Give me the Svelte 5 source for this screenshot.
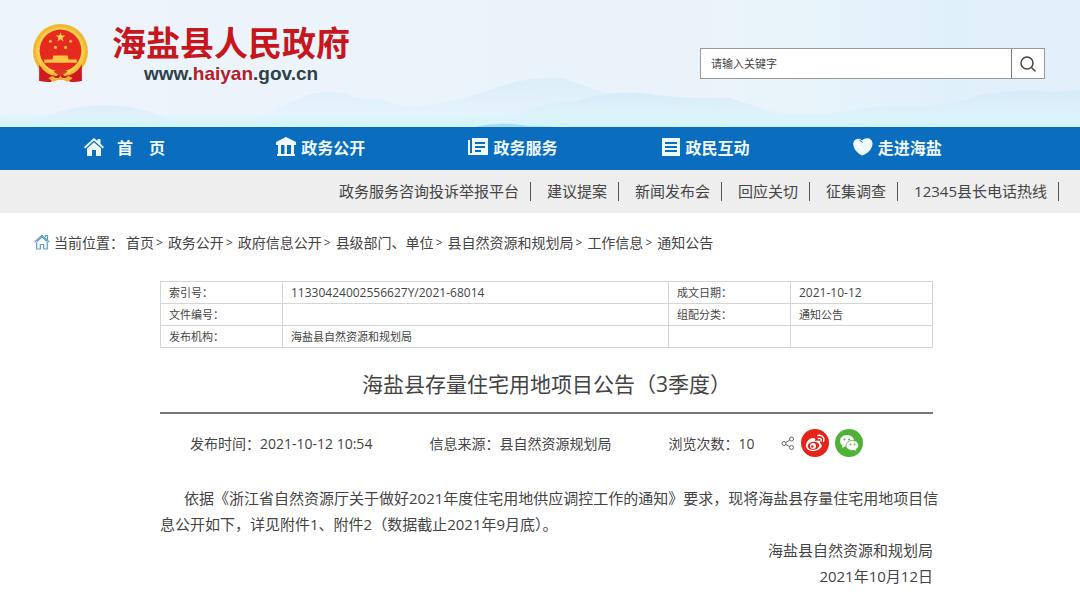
<script lang="ts">
	let keyword = '';

	const nav = [
		{ icon: 'home', label: '首　页' },
		{ icon: 'hall', label: '政务公开' },
		{ icon: 'news', label: '政务服务' },
		{ icon: 'list', label: '政民互动' },
		{ icon: 'heart', label: '走进海盐' }
	];
	const links = ['政务服务咨询投诉举报平台', '建议提案', '新闻发布会', '回应关切', '征集调查', '12345县长电话热线'];
	const crumbs = ['首页', '政务公开', '政府信息公开', '县级部门、单位', '县自然资源和规划局', '工作信息', '通知公告'];
	const rows = [
		['索引号：', '11330424002556627Y/2021-68014', '成文日期：', '2021-10-12'],
		['文件编号：', '', '组配分类：', '通知公告'],
		['发布机构：', '海盐县自然资源和规划局', '', '']
	];
</script>

<header class="header">
	<svg class="hills" viewBox="0 0 1080 127" preserveAspectRatio="none" aria-hidden="true">
		<defs>
			<linearGradient id="sky" x1="0" y1="0" x2="1" y2="0">
				<stop offset="0" stop-color="#edf4fb" />
				<stop offset="0.6" stop-color="#ebf3fa" />
				<stop offset="0.72" stop-color="#e9f4f9" />
				<stop offset="0.88" stop-color="#e0f0fb" />
				<stop offset="1" stop-color="#e3f0fa" />
			</linearGradient>
			<linearGradient id="hill" x1="0" y1="0" x2="0" y2="1">
				<stop offset="0" stop-color="#d3eaf8" />
				<stop offset="1" stop-color="#e4f6fd" />
			</linearGradient>
			<linearGradient id="mist" x1="0" y1="0" x2="0" y2="1">
				<stop offset="0" stop-color="#d5f3fc" stop-opacity="0" />
				<stop offset="1" stop-color="#d2f4fd" />
			</linearGradient>
		</defs>
		<rect width="1080" height="127" fill="url(#sky)" />
		<path d="M20 127Q60 108 90 106Q125 103 150 112L190 127Z" fill="url(#hill)" opacity=".6" />
		<path d="M235 127Q275 111 300 98Q325 88 345 94Q365 101 382 99Q393 107 420 106Q465 100 495 88Q535 74 565 79Q595 90 610 94Q630 90 655 96L720 105V127Z" fill="url(#hill)" opacity=".6" />
		<path d="M490 127Q545 98 575 102Q600 91 640 93Q680 99 730 98L770 111Q800 117 835 113Q875 105 907 107Q950 107 980 95Q1020 88 1050 92L1080 90V127Z" fill="url(#hill)" opacity=".8" />
		<rect y="112" width="1080" height="15" fill="url(#mist)" />
		<path d="M475 127Q500 121 528 126L560 127Z" fill="#a9dcf5" />
	</svg>
	<a class="brand" href="#home">
		<svg class="emblem" viewBox="0 0 54 58" aria-hidden="true">
			<path d="M8 41L7 56L17 57L21 53H34L38 57L48 56L46 41Z" fill="#c91a21" />
			<circle cx="27" cy="27" r="27" fill="#f0b72f" />
			<circle cx="27" cy="27" r="24" fill="#f8cc4d" />
			<circle cx="27" cy="26" r="20.5" fill="#e62a20" />
			<path d="M27 8l1.2 3.4h3.6l-2.9 2.2 1.1 3.5-3-2.1-3 2.1 1.1-3.5-2.9-2.2h3.6z" fill="#f9d34e" />
			<g fill="#f6bd45"><circle cx="17" cy="17" r="1.5" /><circle cx="37" cy="17" r="1.5" /><circle cx="22" cy="23" r="1.5" /><circle cx="32" cy="23" r="1.5" /></g>
			<path d="M20 31h14l1 4h8v3H11v-3h8z" fill="#f8c544" />
			<path d="M8 38Q13 47 22 49L27 45L32 49Q41 47 46 38L44 47L35 53H19L10 47Z" fill="#f3ba35" />
			<path d="M6 40Q13 51 23 51L27 48L31 51Q41 51 48 40V56L37 57L31 53H23L17 57L6 56Z" fill="#cf1920" />
			<path d="M15 53l4-2 5 3 3-3 3 3 5-3 4 2-5 4-4-2h-6l-4 2z" fill="#f1b234" />
			<path d="M20 47Q27 41 34 47L27 51Z" fill="#dc3a20" />
		</svg>
		<span class="brand-text">
			<span class="brand-name">海盐县人民政府</span>
			<span class="brand-url">www.<em>haiyan</em>.gov.cn</span>
		</span>
	</a>
	<form class="search" on:submit|preventDefault>
		<input type="text" placeholder="请输入关键字" aria-label="请输入关键字" bind:value={keyword} />
		<button type="submit" aria-label="搜索">
			<svg viewBox="0 0 18 18" width="18" height="18" fill="none" stroke="#444" stroke-width="1.5">
				<circle cx="8" cy="8" r="6" />
				<path d="M12.500 12.500l4 4" />
			</svg>
		</button>
	</form>
</header>

<nav class="nav">
	{#each nav as item}
		<a href="#{item.icon}" class:nav-home={item.icon === 'home'}>
			<svg viewBox="0 0 20 20" width="20" height="20" fill="#eefaff" aria-hidden="true">
				{#if item.icon === 'home'}
					<path d="M10 1L0 10l1.3 1.4L10 3.6l8.7 7.8L20 10l-3.5-3.2V2h-3v2.1z" />
					<path d="M10 5.2l-7 6.2V19h5v-6h4v6h5v-7.6z" />
				{:else if item.icon === 'hall'}
					<path d="M10 0L0 5V8h2v9H1v2h18v-2h-1V8h2V5zM5 8h3.500v9H5zM11 8h4v9h-4z" fill-rule="evenodd" />
				{:else if item.icon === 'news'}
					<path d="M0 3h2v13h2v2H0z" />
					<path d="M4 1h16v17H3v-2h1zM7 5v2h10V5zM7 9v2h10V9zM7 13v2h6v-2z" fill-rule="evenodd" />
				{:else if item.icon === 'list'}
					<path d="M1 1h18v18H1zM4 5v2h12V5zM4 9v2h12V9zM4 13v2h12v-2z" fill-rule="evenodd" />
				{:else}
					<path d="M9 3.500C6 0 0 2 .3 7.500C.5 13 6 17 9 18.500C15 17 20 11 19.500 6C19 0 12 0 9 3.500Z" />
					<path d="M6.500 3l3 2.500" fill="none" stroke="#0a6dbd" />
				{/if}
			</svg>
			<span>{item.label}</span>
		</a>
	{/each}
</nav>

<div class="subnav">
	{#each links as link}
		<a href="#links">{link}</a>
	{/each}
</div>

<div class="crumbs">
	<svg viewBox="0 0 16 16" width="16" height="16" fill="none" stroke="#5e9fc4" stroke-width="1.2" aria-hidden="true">
		<path d="M.7 8L8 1.3 15.3 8M11.5 3V1.5h2V6M2.7 8v7h3.6v-4.5h3.4V15h3.6V8" />
		<path d="M3 7.5L8 3l5 4.5" />
	</svg>
	<span class="crumbs-label">当前位置：</span>
	{#each crumbs as crumb, i}
		<a href="#crumb">{crumb}</a>
		{#if i < crumbs.length - 1}<span class="arrow">&gt;</span>{/if}
	{/each}
</div>

<main class="article">
	<table class="info">
		<colgroup>
			<col class="col-label" />
			<col />
			<col class="col-label" />
			<col class="col-value" />
		</colgroup>
		<tbody>
			{#each rows as row}
				<tr>
					{#each row as cell}<td class:num={/^\d/.test(cell)}>{cell}</td>{/each}
				</tr>
			{/each}
		</tbody>
	</table>

	<h1>海盐县存量住宅用地项目公告（3季度）</h1>

	<div class="meta">
		<span class="meta-time">发布时间：2021-10-12 10:54</span>
		<span class="meta-source">信息来源：县自然资源规划局</span>
		<span>浏览次数：10</span>
		<div class="share">
			<svg viewBox="0 0 14 14" width="14" height="14" fill="none" stroke="#666" aria-hidden="true">
				<circle cx="3" cy="7.5" r="2" />
				<circle cx="10.5" cy="3" r="2" />
				<circle cx="10.5" cy="11.5" r="2" />
				<path d="M4.7 6.5l4-2.5M4.7 8.5l4 2" />
			</svg>
			<button type="button" class="weibo" aria-label="微博">
				<svg viewBox="0 0 28 28" width="28" height="28">
					<path d="M12 9C8 9 4 14 5 18C6 22 12 23 17 21C21 19 22 16 19 14C20 11 17 11 14 12C15 10 14 9 12 9Z" fill="#fff" />
					<ellipse cx="12.5" cy="16.8" rx="5.8" ry="4" fill="#e6231a" transform="rotate(-8 12.5 16.8)" />
					<circle cx="12" cy="17" r="3" fill="#fff" />
					<circle cx="11.3" cy="17.5" r="1.3" fill="#e6231a" />
					<path d="M17 6.5C21 5.5 24 9 22.5 12.5M17.5 9.5C19.5 9 21 10.5 20 12" fill="none" stroke="#fff" stroke-width="1.4" stroke-linecap="round" />
				</svg>
			</button>
			<button type="button" class="wechat" aria-label="微信">
				<svg viewBox="0 0 28 28" width="28" height="28">
					<path d="M12 6C7.5 6 5 9 5 12C5 14 6 15.5 7.5 16.5L7 19L10 17.5C16 18 19 15 19 12C19 8.500 16 6 12 6Z" fill="#fff" />
					<path d="M17.5 11.5C13.5 11.5 11 14 11 16.5C11 20 14.5 22 19 21.3L21.5 22.5L21 20.5C22.5 19.5 23.5 18 23.5 16.5C23.5 13.5 21 11.5 17.5 11.5Z" fill="#fff" stroke="#4fb136" stroke-width=".8" />
					<g fill="#4fb136"><circle cx="9.5" cy="10.5" r="1" /><circle cx="14" cy="10.5" r="1" /><circle cx="15.5" cy="15.5" r=".9" /><circle cx="19.5" cy="15.5" r=".9" /></g>
				</svg>
			</button>
		</div>
	</div>

	<div class="content">
		<p>依据《浙江省自然资源厅关于做好2021年度住宅用地供应调控工作的通知》要求，现将海盐县存量住宅用地项目信<br />息公开如下，详见附件1、附件2（数据截止2021年9月底）。</p>
		<div class="sign">海盐县自然资源和规划局</div>
		<div class="sign">2021年10月12日</div>
	</div>
</main>

<style>
:global(body) {
	margin: 0;
	background: #fff;
	color: #444;
	font-family: "Open Sans", "Noto Sans CJK SC", sans-serif;
	font-size: 14px;
}
a {
	color: inherit;
	text-decoration: none;
}
.header {
	position: relative;
	display: flex;
	justify-content: space-between;
	height: 127px;
	padding: 0 35px 0 33px;
}
.hills {
	position: absolute;
	inset: 0;
	width: 100%;
	height: 100%;
	z-index: -1;
}
.brand {
	display: flex;
	gap: 24px;
	padding-top: 24px;
}
.emblem {
	width: 55px;
	height: 59px;
}
.brand-text {
	display: flex;
	flex-direction: column;
	align-items: center;
}
.brand-name {
	color: #c8161d;
	font-size: 34px;
	font-weight: bold;
	line-height: 38px;
}
.brand-url {
	color: #2e4049;
	font-family: "Liberation Sans", Arial, sans-serif;
	font-size: 19px;
	font-weight: bold;
	line-height: 24px;
}
.brand-url em {
	color: #b3202a;
	font-style: normal;
}
.search {
	display: flex;
	box-sizing: border-box;
	width: 345px;
	height: 31px;
	margin-top: 48px;
	border: 1px solid #999;
	background: #fff;
}
.search input {
	flex: 1;
	min-width: 0;
	padding: 0 10px;
	border: 0;
	background: none;
	font: inherit;
	font-size: 11px;
}
.search input::placeholder {
	color: #444;
}
.search button {
	display: flex;
	align-items: center;
	justify-content: center;
	width: 33px;
	padding: 0;
	border: 0;
	border-left: 1px solid #777;
	background: none;
}
.nav {
	display: grid;
	grid-template-columns: repeat(5, 1fr);
	box-sizing: border-box;
	height: 43px;
	padding: 0 35px 3px 84px;
	background: #0a6dbd;
	color: #eefaff;
	font-size: 16px;
	font-weight: bold;
}
.nav a {
	display: flex;
	align-items: center;
	gap: 5px;
}
.nav .nav-home {
	gap: 13px;
}
.subnav {
	display: flex;
	align-items: center;
	justify-content: flex-end;
	height: 43px;
	padding-right: 21px;
	background: #eee;
	font-size: 15px;
}
.subnav a {
	padding: 0 11px 0 16px;
	border-right: 1px solid #555;
	line-height: 19px;
}
.crumbs {
	display: flex;
	align-items: center;
	height: 20px;
	padding: 19px 34px 0;
}
.crumbs-label {
	margin: 0 2px 0 4px;
}
.crumbs .arrow {
	margin: 0 5px 0 2px;
	font-size: 12px;
}
.article {
	margin: 29px 147px 0 160px;
}
.info {
	width: 100%;
	table-layout: fixed;
	border-collapse: collapse;
	font-size: 11px;
}
.col-label {
	width: 122px;
}
.col-value {
	width: 142px;
}
.info td {
	height: 21px;
	padding: 0 8px;
	border: 1px solid #d5d5d5;
	line-height: 20px;
}
.info .num {
	font-size: 12px;
}
h1 {
	margin: 0;
	padding: 20px 0 12px;
	border-bottom: 2px solid #777;
	font-size: 21px;
	font-weight: normal;
	line-height: 32px;
	text-align: center;
}
.meta {
	display: flex;
	align-items: center;
	height: 28px;
	padding: 15px 0 0 30px;
}
.meta-time,
.meta-source {
	margin-right: 57px;
}
.share {
	display: flex;
	align-items: center;
	gap: 6px;
	margin-left: 27px;
}
.share button {
	width: 28px;
	height: 28px;
	padding: 0;
	border: 0;
	border-radius: 50%;
}
.share button svg {
	display: block;
}
.weibo {
	background: #e6231a;
}
.wechat {
	background: #4fb136;
}
.content {
	padding-top: 28px;
	font-size: 15px;
	line-height: 26px;
}
.content p {
	margin: 0;
	text-indent: 24px;
	white-space: nowrap;
}
.sign {
	text-align: right;
}
</style>
